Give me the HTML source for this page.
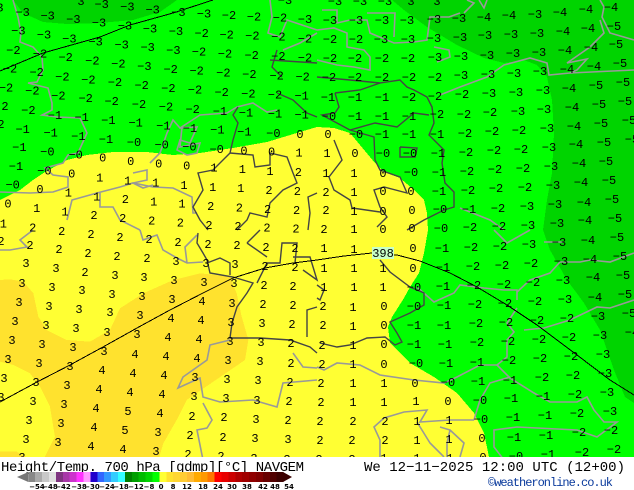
<!DOCTYPE html>
<html><head><meta charset="utf-8"><style>
html,body{margin:0;padding:0;background:#fff}
svg{display:block;position:absolute;left:0;top:0}
#wrap{position:relative;width:634px;height:490px;overflow:hidden;background:#fff}
.l text{font-family:"Liberation Mono",monospace;text-anchor:middle;fill:#000}
</style></head><body><div id="wrap">
<svg width="634" height="457" viewBox="0 0 634 457">
<g shape-rendering="crispEdges">
<rect width="634" height="457" fill="#00ff00"/>
<polygon fill="#00d400" points="13,0 23,13 43,22 67,24 100,23 133,20 160,12 177,0"/>
<polygon fill="#00d400" points="392,0 404,10 427,27 457,45 484,58 504,63 524,60 537,65 547,77 552,100 554,133 552,173 547,200 543,230 550,250 567,280 584,303 600,330 614,370 625,397 634,403 634,0"/>
<polygon fill="#ffff33" points="0,200 20,190 33,180 45,172 67,160 87,155 113,152 147,152 173,155 200,153 233,148 267,142 300,132 317,127 334,128 350,133 360,145 375,163 384,172 400,178 414,190 424,200 427,213 428,230 424,253 419,273 410,287 404,298 392,317 388,327 390,343 410,363 434,377 457,393 474,413 484,433 489,457 0,457"/>
<g transform="translate(0,230) scale(.33333)"><polygon fill="#ffe22e" points="0,150 30,148 70,155 100,190 115,260 140,300 200,330 270,335 330,300 360,235 430,190 520,150 600,130 690,140 710,190 725,260 745,330 735,390 640,455 560,510 530,570 490,640 475,690 130,690 165,620 150,530 120,470 90,430 40,405 0,395"/>
<polygon fill="#ffe22e" points="0,665 50,665 95,690 0,690"/></g>
</g>

<polyline points="13,0 18,17 21,33 20,42 33,47 42,57 43,70 37,82 28,83 48,88 52,103 52,110 42,115 57,117 80,118 87,133 78,153 68,155 63,163 45,168 53,175 68,177 68,187 53,192 30,193 0,192" fill="none" stroke="#999" stroke-width="1.6"/>
<polyline points="67,220 72,200 97,193 120,187 133,183 153,187 173,188 192,197 193,213 197,213" fill="none" stroke="#999" stroke-width="1.6"/>
<polyline points="150,163 160,153 167,133 173,120 180,128 200,115 227,113 237,107 253,103 267,112 277,110" fill="none" stroke="#999" stroke-width="1.6"/>
<polyline points="133,173 147,170 147,180 133,183 143,188 153,185" fill="none" stroke="#999" stroke-width="1.6"/>
<polyline points="100,193 100,207 113,207 120,220 140,230" fill="none" stroke="#999" stroke-width="1.6"/>
<polyline points="182,127 180,147 200,143 197,153 187,155 177,150 180,140 190,143 197,127 180,128" fill="none" stroke="#999" stroke-width="1.6"/>
<polyline points="270,0 272,17 268,33 280,37 287,20 317,30" fill="none" stroke="#999" stroke-width="1.6"/>
<polyline points="283,50 300,43 317,33" fill="none" stroke="#999" stroke-width="1.6"/>
<polyline points="322,10 337,10 337,23 350,20 367,20 370,33 394,43 414,42 427,40 430,17 449,17 460,13" fill="none" stroke="#999" stroke-width="1.6"/>
<polyline points="317,30 334,28 347,33 347,47 364,50 370,57 370,70 354,67 337,65 317,60" fill="none" stroke="#999" stroke-width="1.6"/>
<polyline points="367,13 395,13 394,37" fill="none" stroke="#999" stroke-width="1.6"/>
<polyline points="434,47 449,50 450,57 437,62" fill="none" stroke="#999" stroke-width="1.6"/>
<polyline points="467,0 474,3 464,13" fill="none" stroke="#999" stroke-width="1.6"/>
<polyline points="479,0 484,8 487,0" fill="none" stroke="#999" stroke-width="1.6"/>
<polyline points="440,95 460,87 487,77 504,65 530,58 547,63 549,75 570,73 634,70" fill="none" stroke="#999" stroke-width="1.6"/>
<polyline points="600,20 604,33 590,47 567,63 587,59 577,70 570,73" fill="none" stroke="#999" stroke-width="1.6"/>
<polyline points="600,0 604,7 602,17 610,33 634,40" fill="none" stroke="#999" stroke-width="1.6"/>
<polyline points="460,208 490,220 504,230" fill="none" stroke="#999" stroke-width="1.6"/>
<polyline points="0,250 10,250 27,247 20,240 33,230" fill="none" stroke="#999" stroke-width="1.6"/>
<polyline points="140,230 143,240 157,235 163,250 177,258 187,263 203,262" fill="none" stroke="#999" stroke-width="1.6"/>
<polyline points="187,263 185,247 197,235" fill="none" stroke="#999" stroke-width="1.6"/>
<polyline points="230,340 210,345 207,360 183,377 178,388 200,378 203,397 220,402 253,400 277,407 283,383 317,380" fill="none" stroke="#999" stroke-width="1.6"/>
<polyline points="203,403 212,420 207,428 197,430 203,460" fill="none" stroke="#999" stroke-width="1.6"/>
<polyline points="293,353 303,367 317,368" fill="none" stroke="#999" stroke-width="1.6"/>
<polyline points="417,287 434,302 454,293 460,285 484,288 504,290 517,290 517,300" fill="none" stroke="#999" stroke-width="1.6"/>
<polyline points="517,292 530,280 550,273 560,262 580,262 590,260 610,262 634,253" fill="none" stroke="#999" stroke-width="1.6"/>
<polyline points="544,242 564,242" fill="none" stroke="#999" stroke-width="1.6"/>
<polyline points="494,230 507,243 530,230" fill="none" stroke="#999" stroke-width="1.6"/>
<polyline points="524,330 544,328 570,320 597,307 610,308 634,300" fill="none" stroke="#999" stroke-width="1.6"/>
<polyline points="517,308 507,323 514,332 507,340 507,357 497,365 480,365 457,377 444,383 414,380 380,375 360,365 337,363 324,370 317,367" fill="none" stroke="#999" stroke-width="1.6"/>
<polyline points="497,365 510,378 534,393 550,402 577,402 587,397 594,410 604,422 617,422 597,437 577,430 517,427 494,430 494,447 504,460" fill="none" stroke="#999" stroke-width="1.6"/>
<polyline points="474,420 450,420 420,422 427,410 404,412 384,418 374,427 380,440 380,457" fill="none" stroke="#999" stroke-width="1.6"/>
<polyline points="510,377 490,383 480,400 474,420" fill="none" stroke="#999" stroke-width="1.6"/>
<polyline points="440,427 450,430 447,443 447,457" fill="none" stroke="#999" stroke-width="1.6"/>
<polyline points="450,430 464,443 460,457" fill="none" stroke="#999" stroke-width="1.6"/>
<polyline points="417,422 430,443 444,457" fill="none" stroke="#999" stroke-width="1.6"/>

<polyline points="238,107 233,115 238,123 233,140 230,153 213,170 198,173 203,190 193,207 200,220 208,230" fill="none" stroke="#444" stroke-width="1.4"/>
<polyline points="230,153 253,155 255,167 270,165 270,153 287,157 293,173 297,183 283,190 270,203 267,217 250,213 247,220 237,230" fill="none" stroke="#444" stroke-width="1.4"/>
<polyline points="270,60 317,63" fill="none" stroke="#444" stroke-width="1.4"/>
<polyline points="277,93 293,100 307,113 317,117" fill="none" stroke="#444" stroke-width="1.4"/>
<polyline points="277,50 272,67 282,77" fill="none" stroke="#444" stroke-width="1.4"/>
<polyline points="308,230 310,213 308,197 317,193" fill="none" stroke="#444" stroke-width="1.4"/>
<polyline points="317,77 350,80 380,83 400,80 407,87 414,90 427,97 432,107 434,123 429,135 444,150 442,163 445,183 454,192 454,207 444,210 424,220 407,230" fill="none" stroke="#444" stroke-width="1.4"/>
<polyline points="335,93 339,107 335,113 322,115 350,130 375,123 397,127 414,113 429,115" fill="none" stroke="#444" stroke-width="1.4"/>
<polyline points="350,130 374,137 375,160 380,170 400,177 407,193 384,187 374,190 380,207 387,217 377,227" fill="none" stroke="#444" stroke-width="1.4"/>
<polyline points="335,93 360,90 380,83" fill="none" stroke="#444" stroke-width="1.4"/>
<polyline points="334,140 342,160 329,177 334,190 350,200 352,208 380,212" fill="none" stroke="#444" stroke-width="1.4"/>
<polyline points="400,147 417,148 415,157 400,157 400,147" fill="none" stroke="#444" stroke-width="1.4"/>
<polyline points="198,233 197,243 203,253 207,260 210,273 233,277 253,283 247,293 237,307 232,323 230,338 260,338 290,340 310,347 317,353" fill="none" stroke="#444" stroke-width="1.4"/>
<polyline points="207,263 220,258 230,263 230,275" fill="none" stroke="#444" stroke-width="1.4"/>
<polyline points="257,283 267,263 280,263 282,243 297,243 295,263" fill="none" stroke="#444" stroke-width="1.4"/>
<polyline points="247,243 260,230" fill="none" stroke="#444" stroke-width="1.4"/>
<polyline points="247,243 267,257" fill="none" stroke="#444" stroke-width="1.4"/>
<polyline points="293,257 310,257 317,280 303,270" fill="none" stroke="#444" stroke-width="1.4"/>
<polyline points="317,307 307,310 307,337" fill="none" stroke="#444" stroke-width="1.4"/>
<polyline points="380,260 390,272 410,287 424,293 424,305 410,313 390,322 397,333 402,342 395,345 385,337 367,338 350,345 337,347 320,343" fill="none" stroke="#444" stroke-width="1.4"/>
<polyline points="317,285 324,290 320,300 317,298" fill="none" stroke="#444" stroke-width="1.4"/>

<polyline points="0,71 43,53 100,37 130,25 173,13 213,0" fill="none" stroke="#000" stroke-width="1" shape-rendering="crispEdges"/>
<polyline points="0,402 37,382 70,365 103,347 137,328 170,310 203,293 233,278 265,268 293,263 317,260 344,256 372,253 397,255 420,261 450,273 477,287 507,305 537,325 577,355 610,380 634,395" fill="none" stroke="#000" stroke-width="1" shape-rendering="crispEdges"/>

<g class="l" font-size="36" transform="translate(0,4) scale(.33333)">
<text x="0" y="22">3</text><text x="243" y="3">3</text><text x="305" y="12">−3</text><text x="382" y="20">−3</text><text x="458" y="28">−3</text><text x="535" y="36">−3</text><text x="612" y="41">−3</text><text x="687" y="45">−2</text><text x="762" y="49">−2</text><text x="840" y="53">−2</text><text x="915" y="57">−3</text><text x="855" y="0">−3</text>
<text x="68" y="36">−3</text><text x="143" y="47">−3</text><text x="220" y="57">−3</text><text x="297" y="67">−3</text><text x="375" y="77">−3</text><text x="450" y="85">−3</text><text x="528" y="93">−3</text><text x="605" y="99">−2</text><text x="680" y="103">−2</text><text x="757" y="107">−2</text><text x="835" y="110">−2</text><text x="915" y="115">−2</text>
<text x="55" y="92">−3</text><text x="132" y="104">−3</text><text x="208" y="115">−3</text><text x="287" y="124">−3</text><text x="365" y="133">−3</text><text x="443" y="141">−3</text><text x="520" y="150">−3</text><text x="597" y="155">−2</text><text x="675" y="160">−2</text><text x="755" y="165">−2</text><text x="835" y="168">−2</text><text x="915" y="173">−2</text>
<text x="40" y="150">−2</text><text x="120" y="160">−2</text><text x="197" y="171">−2</text><text x="277" y="181">−2</text><text x="355" y="191">−2</text><text x="433" y="198">−3</text><text x="512" y="207">−2</text><text x="590" y="212">−2</text><text x="670" y="218">−2</text><text x="748" y="222">−2</text><text x="830" y="227">−2</text><text x="908" y="230">−2</text>
<text x="30" y="205">−2</text><text x="110" y="216">−2</text><text x="187" y="229">−2</text><text x="265" y="238">−2</text><text x="345" y="246">−2</text><text x="425" y="255">−2</text><text x="505" y="264">−2</text><text x="585" y="269">−2</text><text x="665" y="276">−2</text><text x="745" y="280">−2</text><text x="825" y="283">−2</text><text x="905" y="286">−1</text>
<text x="18" y="262">−2</text><text x="97" y="272">−2</text><text x="175" y="286">−2</text><text x="257" y="294">−2</text><text x="335" y="303">−2</text><text x="417" y="312">−2</text><text x="498" y="320">−2</text><text x="578" y="327">−2</text><text x="660" y="333">−1</text><text x="738" y="337">−1</text><text x="825" y="341">−1</text><text x="905" y="343">−1</text>
<text x="15" y="318">2</text><text x="85" y="330">−2</text><text x="165" y="345">−1</text><text x="245" y="351">−1</text><text x="325" y="360">−1</text><text x="407" y="368">−1</text><text x="490" y="377">−1</text><text x="570" y="384">−1</text><text x="652" y="389">−1</text><text x="733" y="394">−1</text><text x="820" y="399">−0</text><text x="900" y="402">0</text>
<text x="3" y="372">2</text><text x="68" y="387">−1</text><text x="152" y="398">−1</text><text x="235" y="408">−1</text><text x="318" y="417">−1</text><text x="402" y="426">−0</text><text x="485" y="433">−0</text><text x="568" y="440">−0</text><text x="650" y="447">−0</text><text x="732" y="452">0</text><text x="815" y="455">0</text><text x="897" y="458">1</text>
<text x="58" y="441">−1</text><text x="142" y="454">−0</text><text x="227" y="464">−0</text><text x="308" y="473">0</text><text x="392" y="483">0</text><text x="476" y="490">0</text><text x="560" y="497">0</text><text x="642" y="503">1</text><text x="727" y="507">1</text><text x="810" y="513">1</text><text x="895" y="516">2</text>
<text x="48" y="498">−1</text><text x="133" y="511">−0</text><text x="215" y="521">0</text><text x="299" y="532">1</text><text x="383" y="541">1</text><text x="467" y="548">1</text><text x="552" y="555">1</text><text x="638" y="561">1</text><text x="722" y="564">1</text><text x="807" y="570">2</text><text x="892" y="573">2</text>
<text x="38" y="554">−0</text><text x="120" y="567">0</text><text x="205" y="578">1</text><text x="290" y="589">1</text><text x="376" y="597">2</text><text x="461" y="604">1</text><text x="546" y="611">1</text><text x="632" y="618">2</text><text x="718" y="622">2</text><text x="803" y="627">2</text><text x="890" y="630">2</text>
<text x="24" y="611">0</text><text x="110" y="624">1</text><text x="195" y="635">1</text><text x="282" y="645">2</text><text x="368" y="654">2</text><text x="455" y="661">2</text><text x="541" y="668">2</text><text x="627" y="675">2</text><text x="714" y="678">2</text><text x="801" y="682">2</text><text x="888" y="685">2</text>
<text x="10" y="670">1</text><text x="98" y="682">2</text><text x="185" y="693">2</text>
</g>

<g class="l" font-size="12" transform="translate(0,4)">
<text x="91" y="234">2</text><text x="120" y="237">2</text><text x="149" y="239">2</text><text x="178" y="242">2</text><text x="208" y="244">2</text><text x="237" y="245">2</text><text x="266" y="247">2</text><text x="295" y="248">2</text>
<text x="1" y="241">2</text><text x="30" y="245">2</text><text x="59" y="249">2</text><text x="88" y="253">2</text><text x="117" y="256">2</text><text x="147" y="258">2</text><text x="176" y="261">3</text><text x="206" y="263">3</text><text x="235" y="264">3</text><text x="265" y="266">2</text><text x="295" y="267">2</text>
<text x="26" y="263">3</text><text x="56" y="268">3</text><text x="85" y="272">2</text><text x="115" y="275">3</text><text x="144" y="277">3</text><text x="174" y="280">3</text><text x="204" y="282">3</text><text x="234" y="283">3</text><text x="264" y="285">2</text><text x="293" y="286">2</text>
<text x="22" y="283">3</text><text x="52" y="287">3</text><text x="82" y="290">3</text><text x="112" y="294">3</text><text x="142" y="296">3</text><text x="172" y="299">3</text><text x="202" y="301">4</text><text x="232" y="303">3</text><text x="263" y="304">2</text><text x="293" y="305">2</text>
<text x="19" y="302">3</text><text x="49" y="306">3</text><text x="79" y="309">3</text><text x="110" y="312">3</text><text x="140" y="315">3</text><text x="171" y="318">4</text><text x="201" y="320">4</text><text x="231" y="322">3</text><text x="262" y="323">3</text><text x="292" y="324">2</text>
<text x="15" y="321">3</text><text x="46" y="325">3</text><text x="76" y="328">3</text><text x="107" y="332">3</text><text x="137" y="334">3</text><text x="168" y="337">4</text><text x="199" y="339">4</text><text x="230" y="341">3</text><text x="261" y="342">3</text><text x="291" y="343">2</text>
<text x="12" y="340">3</text><text x="42" y="344">3</text><text x="73" y="347">3</text><text x="104" y="351">3</text><text x="135" y="354">4</text><text x="166" y="356">4</text><text x="197" y="358">4</text><text x="228" y="360">3</text><text x="260" y="361">3</text><text x="291" y="363">2</text>
<text x="8" y="359">3</text><text x="39" y="363">3</text><text x="70" y="366">3</text><text x="102" y="370">4</text><text x="133" y="373">4</text><text x="164" y="375">4</text><text x="195" y="377">3</text><text x="227" y="379">3</text><text x="258" y="380">3</text><text x="290" y="382">2</text>
<text x="4" y="378">3</text><text x="36" y="382">3</text><text x="67" y="385">3</text><text x="99" y="389">4</text><text x="130" y="392">4</text><text x="162" y="394">4</text><text x="194" y="396">3</text><text x="226" y="398">3</text><text x="257" y="400">3</text><text x="289" y="401">2</text>
<text x="1" y="397">3</text><text x="33" y="401">3</text><text x="64" y="404">3</text><text x="96" y="408">4</text><text x="128" y="411">5</text><text x="160" y="413">4</text><text x="192" y="416">2</text><text x="224" y="417">2</text><text x="256" y="419">3</text><text x="288" y="420">2</text>
<text x="29" y="420">3</text><text x="61" y="423">3</text><text x="94" y="427">4</text><text x="125" y="430">5</text><text x="158" y="432">3</text><text x="190" y="435">2</text><text x="223" y="437">2</text><text x="255" y="438">3</text><text x="288" y="439">3</text>
<text x="26" y="439">3</text><text x="58" y="442">3</text><text x="91" y="446">4</text><text x="123" y="449">4</text><text x="156" y="451">3</text><text x="188" y="454">2</text><text x="221" y="456">2</text><text x="254" y="458">3</text><text x="287" y="459">3</text><text x="22" y="457">3</text>

<text x="335" y="1">−3</text><text x="360" y="1">−3</text><text x="385" y="1">−3</text><text x="411" y="1">3</text><text x="437" y="1">3</text>
<text x="330" y="20">−3</text><text x="356" y="20">−3</text><text x="382" y="20">−3</text><text x="407" y="20">−3</text><text x="434" y="19">−3</text><text x="459" y="18">−3</text><text x="484" y="17">−4</text><text x="509" y="15">−4</text><text x="535" y="14">−3</text><text x="560" y="12">−4</text><text x="586" y="9">−4</text><text x="611" y="7">−4</text>
<text x="330" y="39">−2</text><text x="356" y="39">−2</text><text x="381" y="39">−3</text><text x="408" y="39">−3</text><text x="434" y="38">−3</text><text x="460" y="37">−3</text><text x="485" y="35">−3</text><text x="511" y="34">−3</text><text x="537" y="33">−3</text><text x="563" y="31">−4</text><text x="588" y="28">−4</text><text x="614" y="26">−5</text>
<text x="330" y="58">−2</text><text x="355" y="58">−2</text><text x="382" y="58">−2</text><text x="408" y="58">−2</text><text x="435" y="57">−3</text><text x="461" y="56">−3</text><text x="487" y="55">−3</text><text x="513" y="53">−3</text><text x="539" y="52">−3</text><text x="565" y="50">−4</text><text x="591" y="47">−4</text><text x="616" y="44">−5</text>
<text x="329" y="77">−2</text><text x="355" y="77">−2</text><text x="382" y="77">−2</text><text x="409" y="77">−2</text><text x="435" y="77">−2</text><text x="461" y="75">−3</text><text x="488" y="74">−3</text><text x="514" y="73">−3</text><text x="540" y="71">−3</text><text x="567" y="69">−4</text><text x="594" y="66">−4</text><text x="620" y="63">−5</text>
<text x="328" y="97">−1</text><text x="355" y="97">−1</text><text x="382" y="97">−1</text><text x="409" y="97">−2</text><text x="435" y="96">−2</text><text x="462" y="94">−2</text><text x="489" y="93">−3</text><text x="516" y="92">−3</text><text x="543" y="90">−3</text><text x="569" y="88">−4</text><text x="596" y="85">−5</text><text x="623" y="82">−5</text>
<text x="329" y="116">−0</text><text x="355" y="116">−1</text><text x="382" y="116">−1</text><text x="409" y="116">−1</text><text x="437" y="114">−2</text><text x="464" y="114">−2</text><text x="490" y="112">−2</text><text x="518" y="111">−3</text><text x="544" y="109">−3</text><text x="572" y="107">−4</text><text x="599" y="104">−5</text><text x="625" y="101">−5</text>
<text x="328" y="134">0</text><text x="356" y="134">−0</text><text x="382" y="134">−1</text><text x="409" y="134">−1</text><text x="437" y="134">−1</text><text x="465" y="133">−2</text><text x="492" y="131">−2</text><text x="519" y="130">−2</text><text x="547" y="128">−3</text><text x="574" y="126">−4</text><text x="601" y="123">−5</text><text x="629" y="120">−5</text>
<text x="327" y="153">1</text><text x="355" y="153">0</text><text x="383" y="153">−0</text><text x="410" y="153">−0</text><text x="438" y="153">−1</text><text x="466" y="152">−2</text><text x="494" y="150">−2</text><text x="521" y="149">−2</text><text x="549" y="147">−3</text><text x="576" y="144">−4</text><text x="604" y="142">−5</text><text x="632" y="139">−5</text>
<text x="326" y="173">1</text><text x="354" y="173">1</text><text x="383" y="173">0</text><text x="411" y="172">−0</text><text x="439" y="172">−1</text><text x="467" y="171">−2</text><text x="495" y="169">−2</text><text x="523" y="168">−2</text><text x="551" y="166">−3</text><text x="579" y="163">−4</text><text x="606" y="161">−5</text>
<text x="326" y="192">2</text><text x="354" y="192">1</text><text x="383" y="191">0</text><text x="411" y="191">0</text><text x="439" y="191">−1</text><text x="468" y="190">−2</text><text x="496" y="188">−2</text><text x="525" y="187">−2</text><text x="553" y="185">−3</text><text x="581" y="182">−4</text><text x="609" y="180">−5</text>
<text x="326" y="210">2</text><text x="354" y="211">1</text><text x="383" y="211">0</text><text x="412" y="210">0</text><text x="440" y="209">−0</text><text x="469" y="209">−1</text><text x="498" y="208">−2</text><text x="527" y="206">−3</text><text x="555" y="204">−3</text><text x="584" y="202">−4</text><text x="612" y="199">−5</text>
<text x="324" y="229">2</text><text x="354" y="229">1</text><text x="383" y="229">0</text><text x="412" y="228">0</text><text x="441" y="228">−0</text><text x="470" y="227">−2</text><text x="499" y="226">−2</text><text x="528" y="225">−3</text><text x="557" y="223">−3</text><text x="585" y="220">−4</text><text x="615" y="218">−5</text>
<text x="324" y="248">1</text><text x="354" y="249">1</text><text x="413" y="248">0</text><text x="442" y="248">−1</text><text x="471" y="247">−2</text><text x="500" y="246">−2</text><text x="529" y="244">−3</text><text x="559" y="242">−3</text><text x="588" y="240">−4</text><text x="617" y="237">−5</text>
<text x="324" y="268">1</text><text x="354" y="268">1</text><text x="383" y="268">1</text><text x="413" y="268">0</text><text x="443" y="267">−1</text><text x="473" y="266">−2</text><text x="502" y="265">−2</text><text x="531" y="263">−2</text><text x="561" y="261">−3</text><text x="590" y="259">−4</text><text x="620" y="256">−5</text>
<text x="324" y="287">1</text><text x="354" y="287">1</text><text x="383" y="287">1</text><text x="414" y="287">−0</text><text x="443" y="286">−1</text><text x="474" y="285">−2</text><text x="504" y="284">−2</text><text x="533" y="282">−2</text><text x="563" y="280">−3</text><text x="593" y="277">−4</text><text x="623" y="275">−5</text>
<text x="323" y="306">2</text><text x="353" y="307">1</text><text x="384" y="306">0</text><text x="414" y="306">−0</text><text x="444" y="305">−1</text><text x="475" y="304">−2</text><text x="505" y="303">−2</text><text x="535" y="301">−2</text><text x="565" y="299">−3</text><text x="595" y="297">−4</text><text x="625" y="294">−5</text>
<text x="323" y="325">2</text><text x="353" y="326">1</text><text x="384" y="325">0</text><text x="414" y="325">−1</text><text x="444" y="325">−1</text><text x="476" y="323">−2</text><text x="506" y="322">−2</text><text x="537" y="320">−2</text><text x="567" y="318">−2</text><text x="598" y="316">−3</text><text x="629" y="313">−5</text>
<text x="322" y="345">2</text><text x="353" y="345">1</text><text x="384" y="344">0</text><text x="414" y="344">−1</text><text x="445" y="344">−1</text><text x="477" y="342">−2</text><text x="508" y="341">−2</text><text x="539" y="339">−2</text><text x="569" y="337">−2</text><text x="600" y="335">−3</text><text x="632" y="332">−4</text>
<text x="322" y="364">2</text><text x="353" y="364">1</text><text x="384" y="364">0</text><text x="416" y="363">−0</text><text x="446" y="363">−1</text><text x="477" y="362">−1</text><text x="509" y="360">−2</text><text x="540" y="358">−2</text><text x="571" y="356">−2</text><text x="603" y="354">−3</text>
<text x="321" y="383">2</text><text x="353" y="383">1</text><text x="384" y="383">1</text><text x="415" y="383">0</text><text x="448" y="382">−0</text><text x="478" y="381">−1</text><text x="510" y="380">−1</text><text x="542" y="377">−2</text><text x="573" y="375">−2</text><text x="605" y="373">−3</text>
<text x="321" y="402">2</text><text x="353" y="402">1</text><text x="384" y="402">1</text><text x="416" y="401">1</text><text x="448" y="401">0</text><text x="480" y="400">−0</text><text x="511" y="398">−1</text><text x="543" y="396">−1</text><text x="575" y="394">−2</text><text x="607" y="392">−3</text>
<text x="320" y="421">2</text><text x="353" y="421">2</text><text x="385" y="421">2</text><text x="417" y="421">1</text><text x="449" y="420">1</text><text x="481" y="419">−0</text><text x="513" y="417">−1</text><text x="545" y="415">−1</text><text x="577" y="413">−2</text><text x="610" y="411">−3</text>
<text x="320" y="440">2</text><text x="352" y="440">2</text><text x="385" y="440">2</text><text x="417" y="440">1</text><text x="449" y="439">1</text><text x="482" y="438">0</text><text x="514" y="437">−1</text><text x="546" y="435">−1</text><text x="579" y="432">−2</text><text x="611" y="430">−2</text>
<text x="319" y="459">2</text><text x="352" y="459">2</text><text x="384" y="458">1</text><text x="417" y="458">1</text><text x="450" y="458">1</text><text x="483" y="457">0</text><text x="516" y="456">−0</text><text x="548" y="454">−1</text><text x="582" y="452">−2</text><text x="614" y="449">−2</text>
</g>
<rect x="372" y="247" width="22" height="12" fill="#c8ffc8"/>
<text x="383" y="257" font-family="Liberation Mono,monospace" font-size="12" text-anchor="middle" fill="#000">398</text>
</svg>

<svg width="634" height="490" viewBox="0 0 634 490" style="pointer-events:none">
<g font-family="Liberation Mono,monospace" fill="#000">
<text x="1" y="471" font-size="14" textLength="303" lengthAdjust="spacing">Height/Temp. 700 hPa [gdmp][°C] NAVGEM</text>
<text x="364" y="471" font-size="14" textLength="261" lengthAdjust="spacing">We 12−11−2025 12:00 UTC (12+00)</text>
<text x="488" y="486" font-size="12" fill="#0a3a9c" textLength="125" lengthAdjust="spacing">©weatheronline.co.uk</text>
</g>
<polygon points="17,477 28.3,472 28.3,482" fill="#777"/>
<polygon points="283,472 292,477 283,482" fill="#3a0000"/>
<g shape-rendering="crispEdges">
<rect x="28.3" y="472" width="7.2" height="10" fill="#888888"/>
<rect x="35.2" y="472" width="7.2" height="10" fill="#aaaaaa"/>
<rect x="42.1" y="472" width="7.2" height="10" fill="#c8c8c8"/>
<rect x="49" y="472" width="7.2" height="10" fill="#e0e0e0"/>
<rect x="55.9" y="472" width="7.2" height="10" fill="#7f3580"/>
<rect x="62.8" y="472" width="7.2" height="10" fill="#a838a8"/>
<rect x="69.7" y="472" width="7.2" height="10" fill="#cc33cc"/>
<rect x="76.6" y="472" width="7.2" height="10" fill="#ff33ff"/>
<rect x="83.5" y="472" width="7.2" height="10" fill="#ff99ff"/>
<rect x="90.4" y="472" width="7.2" height="10" fill="#2200cc"/>
<rect x="97.3" y="472" width="7.2" height="10" fill="#3366ff"/>
<rect x="104.2" y="472" width="7.2" height="10" fill="#3399ff"/>
<rect x="111.1" y="472" width="7.2" height="10" fill="#33ccff"/>
<rect x="118" y="472" width="7.2" height="10" fill="#33ffff"/>
<rect x="124.9" y="472" width="7.2" height="10" fill="#007f00"/>
<rect x="131.8" y="472" width="7.2" height="10" fill="#009f00"/>
<rect x="138.7" y="472" width="7.2" height="10" fill="#00bb00"/>
<rect x="145.6" y="472" width="7.2" height="10" fill="#00d400"/>
<rect x="152.5" y="472" width="7.2" height="10" fill="#00ff00"/>
<rect x="159.4" y="472" width="7.2" height="10" fill="#ffff33"/>
<rect x="166.3" y="472" width="7.2" height="10" fill="#ffe22e"/>
<rect x="173.2" y="472" width="7.2" height="10" fill="#ffd633"/>
<rect x="180.1" y="472" width="7.2" height="10" fill="#ffcc33"/>
<rect x="187" y="472" width="7.2" height="10" fill="#ffbb33"/>
<rect x="193.9" y="472" width="7.2" height="10" fill="#ffaa00"/>
<rect x="200.8" y="472" width="7.2" height="10" fill="#ff9900"/>
<rect x="207.7" y="472" width="7.2" height="10" fill="#ff7700"/>
<rect x="214.6" y="472" width="7.2" height="10" fill="#ff0000"/>
<rect x="221.5" y="472" width="7.2" height="10" fill="#e80000"/>
<rect x="228.4" y="472" width="7.2" height="10" fill="#cc0000"/>
<rect x="235.3" y="472" width="7.2" height="10" fill="#b00000"/>
<rect x="242.2" y="472" width="7.2" height="10" fill="#a00000"/>
<rect x="249.1" y="472" width="7.2" height="10" fill="#900000"/>
<rect x="256" y="472" width="7.2" height="10" fill="#800000"/>
<rect x="262.9" y="472" width="7.2" height="10" fill="#680000"/>
<rect x="269.8" y="472" width="7.2" height="10" fill="#500000"/>
<rect x="276.7" y="472" width="6.6" height="10" fill="#3c0000"/>
</g>
<g font-family="DejaVu Sans,sans-serif" font-weight="bold" font-size="7" text-anchor="middle" fill="#000">
<text x="37" y="489">−54</text><text x="50" y="489">−48</text><text x="63" y="489">−42</text><text x="79" y="489">−38</text><text x="92" y="489">−30</text><text x="107" y="489">−24</text><text x="121" y="489">−18</text><text x="136" y="489">−12</text><text x="149" y="489">−8</text><text x="161" y="489">0</text><text x="173" y="489">8</text><text x="187" y="489">12</text><text x="203" y="489">18</text><text x="218" y="489">24</text><text x="232" y="489">30</text><text x="247" y="489">38</text><text x="263" y="489">42</text><text x="275" y="489">48</text><text x="289" y="489">54</text>
</g>
</svg>
</div></body></html>
